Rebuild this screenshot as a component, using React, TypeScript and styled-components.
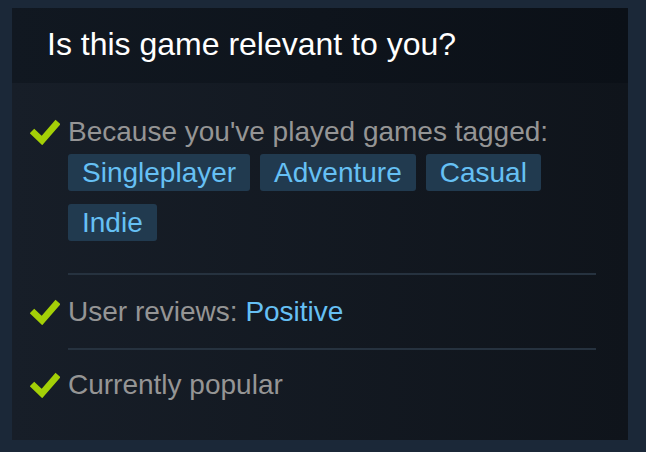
import React from "react";
import styled, { createGlobalStyle } from "styled-components";

const Global = createGlobalStyle`
  html, body { margin: 0; padding: 0; background: #1b2838; }
  body { font-family: "Liberation Sans", Arial, sans-serif; }
`;

const Page = styled.div`
  width: 646px;
  height: 452px;
  box-sizing: border-box;
  padding: 8px 18px 12px 12px;
  background: #1b2838;
`;

const Panel = styled.section`
  height: 100%;
  display: flex;
  flex-direction: column;
  background: linear-gradient(to right, #171e28 0%, #0f141b 100%);
`;

const Header = styled.h2`
  margin: 0;
  height: 75px;
  flex: none;
  box-sizing: border-box;
  padding: 20px 0 0 35px;
  font-size: 32px;
  line-height: 32px;
  font-weight: normal;
  color: #ffffff;
  background: linear-gradient(to right, #111821 0%, #0b1017 100%);
`;

const Body = styled.div`
  display: flex;
  flex-direction: column;
  padding: 34px 32px 0 18px;
`;

const Row = styled.div`
  display: flex;
  align-items: flex-start;
  gap: 8px;
`;

const Divider = styled.hr<{ $top: number; $bottom: number }>`
  margin: ${(p) => `${p.$top}px 0 ${p.$bottom}px 38px`};
  border: none;
  height: 2px;
  background: #26323f;
`;

const Check = styled.svg`
  flex: none;
  width: 30px;
  height: 26px;
  margin-top: 2px;
`;

const Content = styled.div`
  display: flex;
  flex-direction: column;
`;

const Label = styled.span`
  font-size: 28px;
  line-height: 30px;
  color: #959595;
`;

const Highlight = styled.span`
  color: #66c0f4;
`;

const Tags = styled.div`
  display: flex;
  flex-wrap: wrap;
  gap: 13px 10px;
  margin-top: 7px;
  width: 500px;
`;

const Tag = styled.span`
  display: inline-block;
  height: 37px;
  line-height: 37px;
  padding: 0 14px;
  border-radius: 3px;
  background: #213a4f;
  color: #66c0f4;
  font-size: 28px;
`;

const CheckIcon = () => (
  <Check viewBox="0 0 30 26">
    <polyline
      points="2,12 12,21.5 28,3"
      fill="none"
      stroke="#a4d007"
      strokeWidth="6.5"
      strokeLinecap="butt"
      strokeLinejoin="miter"
    />
  </Check>
);

export default function App() {
  return (
    <>
      <Global />
      <Page>
        <Panel>
          <Header>Is this game relevant to you?</Header>
          <Body>
            <Row>
              <CheckIcon />
              <Content>
                <Label>Because you've played games tagged:</Label>
                <Tags>
                  {["Singleplayer", "Adventure", "Casual", "Indie"].map((t) => (
                    <Tag key={t}>{t}</Tag>
                  ))}
                </Tags>
              </Content>
            </Row>
            <Divider $top={32} $bottom={22} />
            <Row>
              <CheckIcon />
              <Label>
                User reviews: <Highlight>Positive</Highlight>
              </Label>
            </Row>
            <Divider $top={21} $bottom={20} />
            <Row>
              <CheckIcon />
              <Label>Currently popular</Label>
            </Row>
          </Body>
        </Panel>
      </Page>
    </>
  );
}
